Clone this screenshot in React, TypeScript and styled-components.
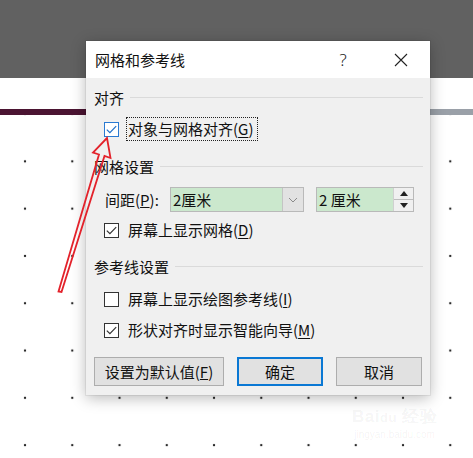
import React from "react";
import styled, { createGlobalStyle } from "styled-components";

const GlobalStyle = createGlobalStyle`
  html, body {
    margin: 0;
    padding: 0;
    overflow: hidden;
  }
  body {
    font-family: "Noto Sans CJK SC", "Noto Sans", sans-serif;
    color: #000;
  }
`;

function CheckBox({ checked, focused }: { checked?: boolean; focused?: boolean }) {
  return (
    <Box $focused={focused}>
      {checked ? (
        <svg width="13" height="13" viewBox="0 0 13 13">
          <polyline
            points="1.8,6.6 4.9,9.7 11.2,3.2"
            fill="none"
            stroke={focused ? "#1e6fc8" : "#333"}
            strokeWidth="1.2"
          />
        </svg>
      ) : null}
    </Box>
  );
}

function App() {
  return (
    <>
      <GlobalStyle />
      <Page>
        <TopBand />
        <Canvas>
          <SlideRule />
        </Canvas>

        <Dialog>
          <TitleBar>
            <Title>网格和参考线</Title>
            <TitleButtons>
              <HelpMark>?</HelpMark>
              <CloseMark>
                <svg width="14" height="14" viewBox="0 0 14 14">
                  <path d="M1 1 L13 13 M13 1 L1 13" stroke="#222" strokeWidth="1.1" />
                </svg>
              </CloseMark>
            </TitleButtons>
          </TitleBar>

          <Body>
            <SectionHeader>对齐</SectionHeader>
            <CheckRow $top={9}>
              <CheckBox checked focused />
              <CheckLabel $focused>
                对象与网格对齐(<u>G</u>)
              </CheckLabel>
            </CheckRow>

            <SectionHeader $top={16}>网格设置</SectionHeader>
            <SpacingRow>
              <FieldLabel>
                间距(<u>P</u>):
              </FieldLabel>
              <Combo>
                <FieldText>2厘米</FieldText>
                <DropButton>
                  <svg width="10" height="6" viewBox="0 0 10 6">
                    <polyline points="1,1 5,5 9,1" fill="none" stroke="#8a8a8a" strokeWidth="1" />
                  </svg>
                </DropButton>
              </Combo>
              <Spin>
                <FieldText>2 厘米</FieldText>
                <SpinButtons>
                  <SpinHalf>
                    <svg width="8" height="5" viewBox="0 0 8 5">
                      <polygon points="0,5 4,0 8,5" fill="#222" />
                    </svg>
                  </SpinHalf>
                  <SpinHalf>
                    <svg width="8" height="5" viewBox="0 0 8 5">
                      <polygon points="0,0 8,0 4,5" fill="#222" />
                    </svg>
                  </SpinHalf>
                </SpinButtons>
              </Spin>
            </SpacingRow>
            <CheckRow $top={6}>
              <CheckBox checked />
              <CheckLabel>
                屏幕上显示网格(<u>D</u>)
              </CheckLabel>
            </CheckRow>

            <SectionHeader $top={15}>参考线设置</SectionHeader>
            <CheckRow $top={10}>
              <CheckBox />
              <CheckLabel>
                屏幕上显示绘图参考线(<u>I</u>)
              </CheckLabel>
            </CheckRow>
            <CheckRow $top={7}>
              <CheckBox checked />
              <CheckLabel>
                形状对齐时显示智能向导(<u>M</u>)
              </CheckLabel>
            </CheckRow>

            <ButtonRow>
              <DialogButton $width={130}>
                设置为默认值(<u>F</u>)
              </DialogButton>
              <DialogButton $width={86} $primary>
                确定
              </DialogButton>
              <DialogButton $width={86}>取消</DialogButton>
            </ButtonRow>
          </Body>
        </Dialog>

        <Arrow width="473" height="458" viewBox="0 0 473 458">
          <polygon
            points="107,138 110.5,158 104.5,156 61.5,292 58.5,291.5 99,154.5 93,152.5"
            fill="none"
            stroke="#e3222b"
            strokeWidth="1.8"
            strokeLinejoin="miter"
          />
        </Arrow>

        <Watermark>
          <WatermarkLogo>
            Bai<Paw>du</Paw> 经验
          </WatermarkLogo>
          <WatermarkUrl>jingyan.baidu.com</WatermarkUrl>
        </Watermark>
      </Page>
    </>
  );
}

const Page = styled.div`
  position: relative;
  width: 473px;
  height: 458px;
  display: flex;
  flex-direction: column;
  overflow: hidden;
  background: #fff;
`;

const TopBand = styled.div`
  height: 78px;
  background: #616161;
`;

const Canvas = styled.div`
  flex: 1;
  display: flex;
  flex-direction: column;
  background-color: #fff;
  background-image: radial-gradient(circle, #2a2a2a 0.9px, rgba(0, 0, 0, 0) 1.6px);
  background-size: 47.25px 47.3px;
  background-position: 1.4px 12.4px;
`;

const SlideRule = styled.div`
  margin-top: 31px;
  height: 6px;
  background: linear-gradient(to right, #4b1432 0%, #4b1432 55%, #9aa0a8 55%, #9aa0a8 100%);
`;

const Dialog = styled.div`
  position: absolute;
  left: 86px;
  top: 41px;
  width: 344px;
  height: 354px;
  display: flex;
  flex-direction: column;
  background: #f0f0f0;
  box-shadow: 0 3px 14px rgba(0, 0, 0, 0.28), 0 0 0 1px rgba(0, 0, 0, 0.06);
`;

const TitleBar = styled.div`
  height: 37px;
  display: flex;
  align-items: center;
  justify-content: space-between;
  padding-left: 9px;
  background: #fff;
`;

const Title = styled.div`
  font-size: 15px;
  line-height: 20px;
  color: #111;
`;

const TitleButtons = styled.div`
  display: flex;
  align-items: center;
  height: 100%;
`;

const HelpMark = styled.div`
  width: 58px;
  text-align: center;
  font-family: "Noto Sans", sans-serif;
  font-size: 17px;
  font-weight: 300;
  color: #222;
`;

const CloseMark = styled.div`
  width: 57px;
  display: flex;
  justify-content: center;
  align-items: center;
  padding-right: 1px;
`;

const Body = styled.div`
  flex: 1;
  display: flex;
  flex-direction: column;
  padding: 10px 7px 9px 8px;
  font-size: 15px;
`;

const SectionHeader = styled.div<{ $top?: number }>`
  display: flex;
  align-items: center;
  gap: 6px;
  height: 20px;
  line-height: 20px;
  margin-top: ${(p) => p.$top ?? 0}px;
  color: #111;
  &::after {
    content: "";
    flex: 1;
    height: 1px;
    margin-top: -1px;
    background: #dadada;
  }
`;

const CheckRow = styled.div<{ $top: number }>`
  display: flex;
  align-items: center;
  height: 24px;
  margin-top: ${(p) => p.$top}px;
  padding-left: 10px;
  gap: 7px;
`;

const Box = styled.span<{ $focused?: boolean }>`
  width: 13px;
  height: 13px;
  flex-shrink: 0;
  display: flex;
  align-items: center;
  justify-content: center;
  background: #fff;
  border: 1px solid ${(p) => (p.$focused ? "#2a7ad2" : "#333")};
`;

const CheckLabel = styled.span<{ $focused?: boolean }>`
  display: flex;
  align-items: center;
  height: 22px;
  padding: 0 3px 0 1px;
  line-height: 22px;
  color: #111;
  border: 1px dotted ${(p) => (p.$focused ? "#222" : "transparent")};
  u {
    text-underline-offset: 2px;
  }
`;

const SpacingRow = styled.div`
  display: flex;
  align-items: center;
  height: 25px;
  margin-top: 10px;
  padding-left: 11px;
`;

const FieldLabel = styled.div`
  width: 65px;
  color: #111;
  line-height: 20px;
`;

const Combo = styled.div`
  width: 134px;
  height: 25px;
  box-sizing: border-box;
  display: flex;
  border: 1px solid #b9b9b9;
  background: #cbe8cd;
`;

const FieldText = styled.div`
  flex: 1;
  padding-left: 2px;
  line-height: 23px;
  color: #111;
`;

const DropButton = styled.div`
  width: 20px;
  display: flex;
  align-items: center;
  justify-content: center;
  background: #e2e2e2;
  border-left: 1px solid #c4c4c4;
`;

const Spin = styled.div`
  width: 98px;
  height: 25px;
  margin-left: 12px;
  box-sizing: border-box;
  display: flex;
  border: 1px solid #b9b9b9;
  background: #cbe8cd;
`;

const SpinButtons = styled.div`
  width: 19px;
  display: flex;
  flex-direction: column;
  background: #f0f0f0;
  border-left: 1px solid #d0d0d0;
`;

const SpinHalf = styled.div`
  flex: 1;
  display: flex;
  align-items: center;
  justify-content: center;
  & + & {
    border-top: 1px solid #bdbdbd;
  }
`;

const ButtonRow = styled.div`
  display: flex;
  gap: 13px;
  margin-top: 15px;
`;

const DialogButton = styled.div<{ $width: number; $primary?: boolean }>`
  width: ${(p) => p.$width}px;
  height: 29px;
  box-sizing: border-box;
  display: flex;
  align-items: center;
  justify-content: center;
  background: #e1e1e1;
  border: ${(p) => (p.$primary ? "2px solid #0a78d4" : "1px solid #adadad")};
  color: #111;
  font-size: 15px;
`;

const Arrow = styled.svg`
  position: absolute;
  left: 0;
  top: 0;
  pointer-events: none;
`;

const Watermark = styled.div`
  position: absolute;
  left: 352px;
  top: 405px;
  display: flex;
  flex-direction: column;
  align-items: center;
  color: rgba(0, 0, 0, 0.055);
  font-family: "Liberation Sans", sans-serif;
`;

const WatermarkLogo = styled.div`
  font-size: 17px;
  font-weight: bold;
  letter-spacing: 0.5px;
`;

const Paw = styled.span`
  font-size: 13px;
`;

const WatermarkUrl = styled.div`
  font-size: 10px;
  margin-top: 1px;
`;

export default App;
